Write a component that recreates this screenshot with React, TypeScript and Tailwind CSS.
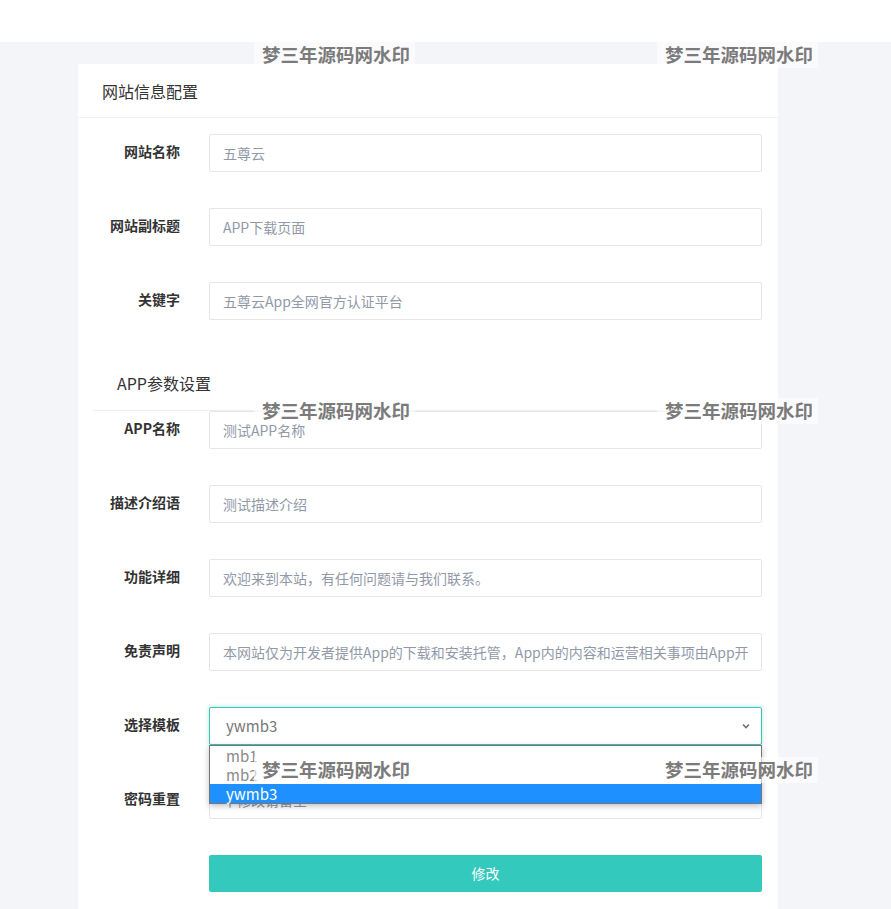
import React from 'react';

const fields1 = [
  { label: '网站名称', placeholder: '五尊云' },
  { label: '网站副标题', placeholder: 'APP下载页面' },
  { label: '关键字', placeholder: '五尊云App全网官方认证平台' },
];

const fields2 = [
  { label: 'APP名称', placeholder: '测试APP名称' },
  { label: '描述介绍语', placeholder: '测试描述介绍' },
  { label: '功能详细', placeholder: '欢迎来到本站，有任何问题请与我们联系。' },
  { label: '免责声明', placeholder: '本网站仅为开发者提供App的下载和安装托管，App内的内容和运营相关事项由App开发者负责' },
];

const watermarks = [
  'left-[254px] top-[42px]',
  'left-[657px] top-[42px]',
  'left-[254px] top-[398px]',
  'left-[657px] top-[398px]',
  'left-[254px] top-[757px]',
  'left-[657px] top-[757px]',
];

function Row({ label, children }: { label: string; children: React.ReactNode }) {
  return (
    <div className="flex">
      <div className="w-[102px] shrink-0 pt-[7px] text-right text-[14px] font-bold leading-[20px] text-[#333]">{label}</div>
      <div className="ml-[29px] w-[553px]">{children}</div>
    </div>
  );
}

function Field({ placeholder }: { placeholder: string }) {
  return (
    <input
      type="text"
      placeholder={placeholder}
      className="h-[38px] w-full rounded-[2px] border border-[#e6e6e6] bg-white px-[13px] text-[14px] text-[#333] outline-none placeholder:text-[#9199a8]"
    />
  );
}

export default function App() {
  return (
    <div className="relative min-h-[909px] overflow-hidden bg-[#f4f5f9] font-['Noto_Sans_CJK_SC','Noto_Sans',sans-serif]">
      <div className="h-[42px] bg-white" />

      <div className="pl-[78px] pt-[22px]">
        <div className="w-[700px] bg-white pb-[40px]">
          <div className="flex h-[54px] items-center border-b border-[#f2f2f2] px-[24px] text-[16px] text-[#333]">
            网站信息配置
          </div>

          <div className="flex flex-col gap-[36px] pt-[16px]">
            {fields1.map((f) => (
              <Row key={f.label} label={f.label}>
                <Field placeholder={f.placeholder} />
              </Row>
            ))}
          </div>

          <div className="mt-[52px] pl-[39px] text-[16px] leading-[22px] text-[#333]">APP参数设置</div>
          <div className="ml-[15px] mr-[16px] mt-[16px] border-t border-[#eeeeee]" />

          <div className="flex flex-col gap-[36px]">
            {fields2.map((f) => (
              <Row key={f.label} label={f.label}>
                <Field placeholder={f.placeholder} />
              </Row>
            ))}

            <Row label="选择模板">
              <div className="relative">
                <div className="flex h-[38px] items-center justify-between rounded-[2px] border border-[#3cc5b6] bg-white pl-[16px] pr-[10px] text-[15px] text-[#777] shadow-[0_0_4px_rgba(60,197,182,0.45)]">
                  <span>ywmb3</span>
                  <svg width="10" height="10" viewBox="0 0 10 10" fill="none" stroke="#6b7280" strokeWidth="1.6">
                    <path d="M2 3.5 5 6.5 8 3.5" />
                  </svg>
                </div>
                <div className="absolute left-0 right-0 top-[38px] z-10 border border-[#767676] bg-white text-[15px] leading-[19px] shadow-[0_2px_6px_rgba(0,0,0,0.25)]">
                  <div className="pl-[16px] text-[#8a8a8a]">mb1</div>
                  <div className="pl-[16px] text-[#8a8a8a]">mb2</div>
                  <div className="bg-[#1e90ff] pl-[16px] text-white">ywmb3</div>
                </div>
              </div>
            </Row>

            <Row label="密码重置">
              <Field placeholder="不修改请留空" />
            </Row>

            <div className="flex">
              <div className="ml-[131px] w-[553px]">
                <button className="h-[37px] w-full rounded-[2px] bg-[#33c9bc] text-[14px] text-white">修改</button>
              </div>
            </div>
          </div>
        </div>
      </div>

      {watermarks.map((pos) => (
        <div
          key={pos}
          className={`pointer-events-none absolute z-20 flex h-[26px] w-[161px] items-center bg-white/60 pl-[8px] text-[18.5px] font-bold text-[#7b7b7b] ${pos}`}
        >
          梦三年源码网水印
        </div>
      ))}
    </div>
  );
}
